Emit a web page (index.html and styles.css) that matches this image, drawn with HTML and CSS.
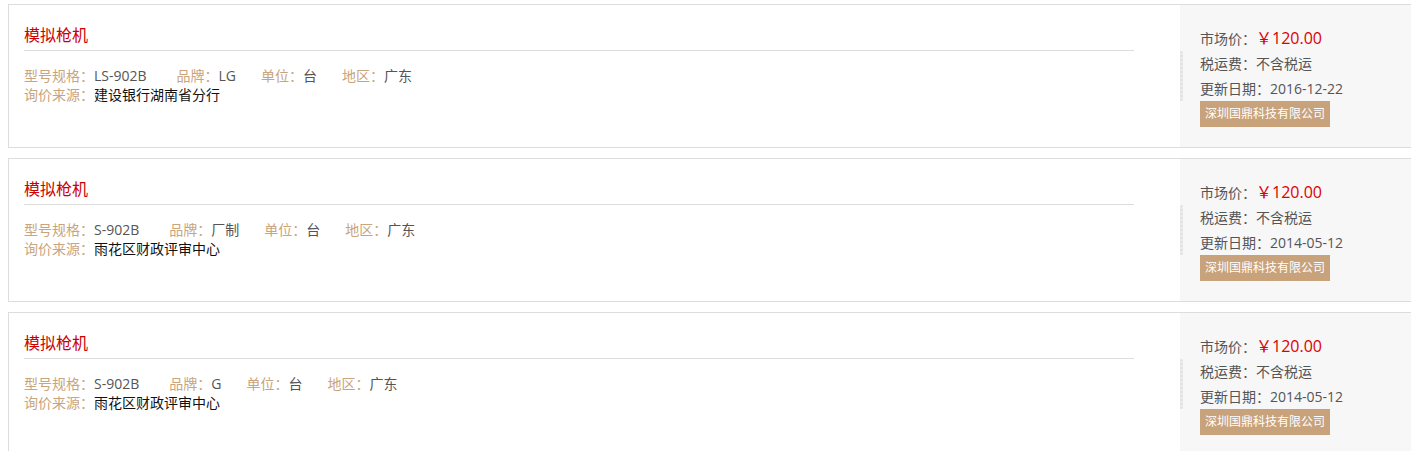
FILE: index.html
```html
<!doctype html>
<html lang="zh-CN">
<head>
  <meta charset="utf-8">
  <title>询价列表</title>
  <link rel="stylesheet" href="styles.css">
</head>
<body>
  <div class="price-list">
    <div class="item">
      <div class="item-main">
        <h3 class="item-title">模拟枪机</h3>
        <p class="item-attrs">
          <span class="attr attr-model"><em>型号规格：</em>LS-902B</span>
          <span class="attr"><em>品牌：</em>LG</span>
          <span class="attr"><em>单位：</em>台</span>
          <span class="attr"><em>地区：</em>广东</span>
        </p>
        <p class="item-source"><em>询价来源：</em>建设银行湖南省分行</p>
      </div>
      <div class="item-side">
        <p>市场价：<span class="price">￥120.00</span></p>
        <p>税运费：不含税运</p>
        <p>更新日期：2016-12-22</p>
        <span class="company">深圳国鼎科技有限公司</span>
      </div>
    </div>
    <div class="item">
      <div class="item-main">
        <h3 class="item-title">模拟枪机</h3>
        <p class="item-attrs">
          <span class="attr attr-model"><em>型号规格：</em>S-902B</span>
          <span class="attr"><em>品牌：</em>厂制</span>
          <span class="attr"><em>单位：</em>台</span>
          <span class="attr"><em>地区：</em>广东</span>
        </p>
        <p class="item-source"><em>询价来源：</em>雨花区财政评审中心</p>
      </div>
      <div class="item-side">
        <p>市场价：<span class="price">￥120.00</span></p>
        <p>税运费：不含税运</p>
        <p>更新日期：2014-05-12</p>
        <span class="company">深圳国鼎科技有限公司</span>
      </div>
    </div>
    <div class="item">
      <div class="item-main">
        <h3 class="item-title">模拟枪机</h3>
        <p class="item-attrs">
          <span class="attr attr-model"><em>型号规格：</em>S-902B</span>
          <span class="attr"><em>品牌：</em>G</span>
          <span class="attr"><em>单位：</em>台</span>
          <span class="attr"><em>地区：</em>广东</span>
        </p>
        <p class="item-source"><em>询价来源：</em>雨花区财政评审中心</p>
      </div>
      <div class="item-side">
        <p>市场价：<span class="price">￥120.00</span></p>
        <p>税运费：不含税运</p>
        <p>更新日期：2014-05-12</p>
        <span class="company">深圳国鼎科技有限公司</span>
      </div>
    </div>
  </div>
</body>
</html>
```

FILE: styles.css
```css
html, body {
  margin: 0;
  padding: 0;
  background: #fff;
  overflow: hidden;
}
body {
  padding: 4px 0 0 8px;
  font-family: "Open Sans", "Noto Sans CJK SC", sans-serif;
  font-size: 14px;
  color: #555;
}
p {
  margin: 0;
}
em {
  font-style: normal;
}
.price-list {
  display: flex;
  flex-flow: column nowrap;
  gap: 10px;
}
.item {
  display: flex;
  flex-flow: row nowrap;
  width: 1411px;
  height: 142px;
  border: 1px solid #ddd;
}
.item-main {
  flex: none;
  width: 1110px;
  padding: 15px 46px 0 15px;
}
.item-title {
  margin: 0;
  height: 30px;
  line-height: 30px;
  font-size: 16px;
  font-weight: normal;
  color: #c00;
  border-bottom: 1px solid #ddd;
}
.item-attrs {
  margin-top: 15px;
  height: 19px;
  line-height: 19px;
  white-space: nowrap;
  display: flex;
  flex-flow: row nowrap;
}
.attr {
  margin-right: 25px;
}
.attr-model {
  margin-right: 30px;
}
.item-attrs em, .item-source em {
  color: #c9a47c;
}
.item-source {
  height: 19px;
  line-height: 19px;
  color: #111;
}
.item-side {
  position: relative;
  flex: auto;
  background-color: #f7f7f7;
  padding: 21px 20px 0;
  line-height: 25px;
  color: #555;
}
.item-side p {
  height: 25px;
}
.item-side::before {
  content: "";
  position: absolute;
  left: 0;
  top: 46px;
  width: 3px;
  height: 50px;
  border-radius: 2px;
  background: repeating-linear-gradient(#e2e2e2 0, #e2e2e2 2px, #ebebeb 2px, #ebebeb 4px);
}
.price {
  font-size: 16px;
  color: #d00;
}
.company {
  display: inline-block;
  height: 26px;
  line-height: 26px;
  padding: 0 5px;
  font-size: 12px;
  color: #fff;
  background-color: #c8a27a;
  vertical-align: top;
}
```
